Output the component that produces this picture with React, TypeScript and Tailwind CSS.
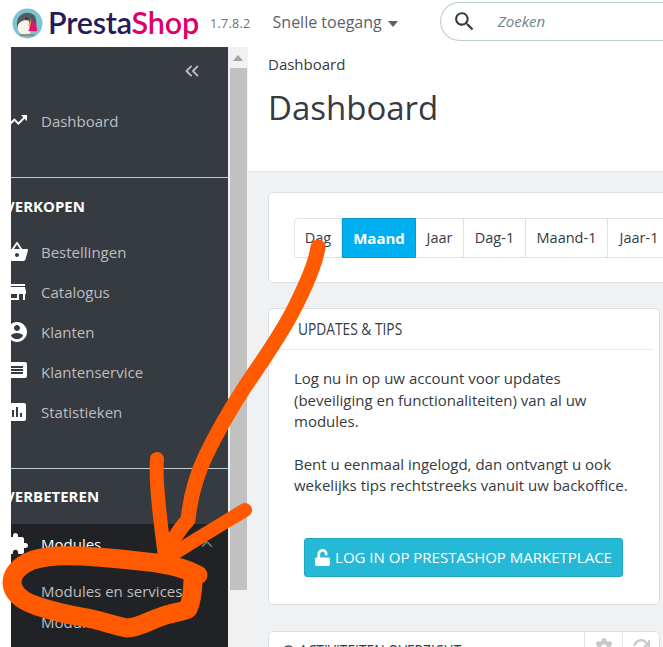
import { FaUnlock, FaCog } from "react-icons/fa";
import { FiRefreshCw } from "react-icons/fi";
import { ChevronsLeft, ChevronUp } from "lucide-react";

const paths = {
  trend: "M16 6l2.29 2.29-4.88 4.88-4-4L2 16.59 3.41 18l6-6 4 4 6.3-6.29L22 12V6z",
  basket: "M17.21 9l-4.38-6.56c-.19-.28-.51-.42-.83-.42-.32 0-.64.14-.83.43L6.79 9H2c-.55 0-1 .45-1 1 0 .09.01.18.04.27l2.54 9.27c.23.84 1 1.46 1.92 1.46h13c.92 0 1.69-.62 1.93-1.46l2.54-9.27L23 10c0-.55-.45-1-1-1h-4.79zM9 9l3-4.4L15 9H9zm3 8c-1.1 0-2-.9-2-2s.9-2 2-2 2 .9 2 2-.9 2-2 2z",
  store: "M20 4H4v2h16V4zm1 10v-2l-1-5H4l-1 5v2h1v6h10v-6h4v6h2v-6h1zm-9 4H6v-4h6v4z",
  account: "M12 2C6.48 2 2 6.48 2 12s4.48 10 10 10 10-4.48 10-10S17.52 2 12 2zm0 3c1.66 0 3 1.34 3 3s-1.34 3-3 3-3-1.34-3-3 1.34-3 3-3zm0 14.2c-2.5 0-4.71-1.28-6-3.22.03-1.99 4-3.08 6-3.08 1.99 0 5.97 1.09 6 3.08-1.29 1.94-3.5 3.22-6 3.22z",
  chat: "M20 2H4c-1.1 0-1.99.9-1.99 2L2 22l4-4h14c1.1 0 2-.9 2-2V4c0-1.1-.9-2-2-2zm-2 12H6v-2h12v2zm0-3H6V9h12v2zm0-3H6V6h12v2z",
  stats: "M19 3H5c-1.1 0-2 .9-2 2v14c0 1.1.9 2 2 2h14c1.1 0 2-.9 2-2V5c0-1.1-.9-2-2-2zM9 17H7v-7h2v7zm4 0h-2V7h2v10zm4 0h-2v-4h2v4z",
  ext: "M20.5 11H19V7c0-1.1-.9-2-2-2h-4V3.5C13 2.12 11.88 1 10.5 1S8 2.12 8 3.5V5H4c-1.1 0-1.99.9-1.99 2v3.8H3.5c1.49 0 2.7 1.21 2.7 2.7s-1.21 2.7-2.7 2.7H2V20c0 1.1.9 2 2 2h3.8v-1.5c0-1.49 1.21-2.7 2.7-2.7 1.49 0 2.7 1.21 2.7 2.7V22H17c1.1 0 2-.9 2-2v-4h1.5c1.38 0 2.5-1.12 2.5-2.5S21.88 11 20.5 11z",
};

function Icon({ d }: { d: string }) {
  return (
    <svg viewBox="0 0 24 24" className="w-6 h-6 shrink-0 fill-white">
      <path d={d} />
    </svg>
  );
}

function NavItem({ d, label, className = "h-10", text = "text-[#bebebe]" }: { d: string; label: string; className?: string; text?: string }) {
  return (
    <div className={`flex items-center -ml-[6px] ${className}`}>
      <Icon d={d} />
      <span className={`ml-3 text-[15px] ${text}`}>{label}</span>
    </div>
  );
}

function Logo() {
  return (
    <svg viewBox="0 0 32 32" className="w-[31px] h-[31px] shrink-0">
      <circle cx="16" cy="16" r="15.5" fill="#7cc4d2" />
      <path d="M5 17c0-8 5-12 11-12s9 4 9 9v8H9c-3 0-4-2-4-5z" fill="#565a60" />
      <path d="M6 18c2-5 7-6 11-5l3 10c-1 3-3 5-6 5-5 0-9-4-8-10z" fill="#f4f4f0" />
      <path d="M20 11l5 7 1 6h-9z" fill="#e6106f" />
      <path d="M20 11l-3 6 1 6z" fill="#f5b335" />
      <circle cx="15" cy="11" r="1.2" fill="#222" />
      <path d="M8 27h15v2H8z" fill="#9a8468" />
    </svg>
  );
}

const periods = [
  { t: "Dag", w: "w-[47px]" },
  { t: "Maand", w: "w-[74px]", active: true },
  { t: "Jaar", w: "w-12" },
  { t: "Dag-1", w: "w-[62px]" },
  { t: "Maand-1", w: "w-[82px]" },
  { t: "Jaar-1", w: "w-[62px]" },
];

export default function App() {
  return (
    <div className="relative w-[663px] h-[647px] overflow-hidden bg-white font-['Open_Sans',sans-serif] text-[#363a41]">
      {/* top bar */}
      <header className="flex items-center h-[47px] pl-3 whitespace-nowrap">
        <Logo />
        <span className="ml-[5px] w-[157px] shrink-0 font-['Lato',sans-serif] font-semibold text-[30.5px] leading-none tracking-[-0.2px] -mt-[2px]">
          <span className="text-[#251b5b]">Presta</span>
          <span className="text-[#df0067]">Shop</span>
        </span>
        <span className="ml-[5px] mt-[2px] text-[12.5px] tracking-[0.3px] text-[#6c6f75]">1.7.8.2</span>
        <span className="ml-[22px] -mt-[3px] text-[16px] text-[#5c6169]">Snelle toegang</span>
        <svg viewBox="0 0 10 6" className="ml-[6px] w-[10px] h-[6px] shrink-0 fill-[#5c6169]"><path d="M0 0h10L5 6z" /></svg>
        <div className="ml-[42px] flex items-center shrink-0 w-[260px] h-[39px] -mt-[4px] rounded-l-[20px] border border-r-0 border-[#bbcdd2]">
          <svg viewBox="0 0 24 24" className="ml-[11px] w-[25px] h-[25px] fill-[#363a41]">
            <path d="M15.5 14h-.79l-.28-.27C15.41 12.59 16 11.11 16 9.5 16 5.91 13.09 3 9.5 3S3 5.91 3 9.5 5.91 16 9.5 16c1.61 0 3.09-.59 4.23-1.57l.27.28v.79l5 4.99L20.49 19l-4.99-5zm-6 0C7.01 14 5 11.99 5 9.5S7.01 5 9.5 5 14 7.01 14 9.5 11.99 14 9.5 14z" />
          </svg>
          <span className="ml-[21px] italic text-[15px] text-[#6c868e]">Zoeken</span>
        </div>
      </header>

      <div className="flex h-[600px] pl-[11px]">
        {/* sidebar */}
        <aside className="w-[217px] shrink-0 overflow-hidden bg-[#363a41] flex flex-col">
          <div className="shrink-0 h-[131px] border-b border-[#bbcdd2] pr-[25px]">
            <div className="flex justify-end pt-[13px]">
              <ChevronsLeft size={22} strokeWidth={2} className="text-[#bebebe]" />
            </div>
            <NavItem d={paths.trend} label="Dashboard" className="h-6 mt-[27px]" />
          </div>
          <div className="shrink-0 h-[56px] flex items-center -ml-[6px] font-bold text-[15px] text-white">VERKOPEN</div>
          <div className="shrink-0 flex flex-col h-[235px] border-b border-[#bbcdd2]">
            <div className="-mt-[2px]">
              <NavItem d={paths.basket} label="Bestellingen" />
              <NavItem d={paths.store} label="Catalogus" />
              <NavItem d={paths.account} label="Klanten" />
              <NavItem d={paths.chat} label="Klantenservice" />
              <NavItem d={paths.stats} label="Statistieken" />
            </div>
          </div>
          <div className="shrink-0 h-[55px] flex items-center -ml-[6px] font-bold text-[15px] text-white">VERBETEREN</div>
          <div className="flex-1 bg-[#202226] flex flex-col">
            <div className="flex items-center justify-between pr-[12px]">
              <NavItem d={paths.ext} label="Modules" text="text-white" />
              <ChevronUp size={18} className="text-[#6c868e]" />
            </div>
            <div className="pl-[30px] h-[26px] mt-[14px] flex items-center text-[15px] text-[#bebebe]">Modules en services</div>
            <div className="pl-[30px] h-[26px] mt-[5px] flex items-center text-[15px] text-[#bebebe]">Module manager</div>
          </div>
        </aside>

        {/* scrollbar */}
        <div className="w-5 shrink-0 bg-[#f1f1f1] flex flex-col items-center pt-[8px]">
          <svg viewBox="0 0 10 6" className="w-[10px] h-[6px] fill-[#a3a3a3]"><path d="M5 0l5 6H0z" /></svg>
          <div className="mt-[7px] w-[17px] h-[522px] bg-[#c1c1c1]" />
        </div>

        {/* content */}
        <main className="flex-1 min-w-0 overflow-hidden bg-[#eff1f2] flex flex-col">
          <div className="shrink-0 h-[125px] bg-white border-b border-[#dfe3e5] pl-5 pt-[7px]">
            <div className="text-[15px] leading-5 text-[#363a41]">Dashboard</div>
            <h1 className="mt-[12px] text-[33px] leading-[44px] font-normal text-[#363a41]">Dashboard</h1>
          </div>

          <div className="pl-5 pt-5 flex flex-col">
            <section className="w-[420px] h-[91px] rounded-[5px] bg-white border border-[#dbe0e2] pl-[25px] pt-[25px]">
              <div className="inline-flex h-[40px] rounded-[4px] border border-[#dfe3e5] w-max">
                {periods.map((p) => (
                  <div
                    key={p.t}
                    className={
                      p.active
                        ? `${p.w} flex items-center justify-center -my-px bg-[#00aff0] border border-[#0a98cf] text-white font-bold text-[15px]`
                        : `${p.w} flex items-center justify-center border-r border-[#dfe3e5] text-[14.5px] text-[#363a41] last:border-r-0`
                    }
                  >
                    {p.t}
                  </div>
                ))}
              </div>
            </section>

            <section className="mt-[25px] w-[392px] h-[297px] rounded-[5px] bg-white border border-[#dbe0e2] px-[5px] flex flex-col">
              <div className="h-[40px] ml-[24px] -mr-[5px] flex items-center text-[16px] text-[#363a41]">
                <span className="inline-block origin-left scale-x-[0.86] whitespace-nowrap">UPDATES &amp; TIPS</span>
              </div>
              <div className="border-t border-[#e8eaeb]" />
              <p className="mt-[18px] ml-[20px] w-[340px] text-[15px] leading-[21.5px] text-[#363a41]">
                Log nu in op uw account voor updates (beveiliging en functionaliteiten) van al uw modules.
              </p>
              <p className="mt-[21px] ml-[20px] w-[340px] text-[15px] leading-[21.5px] text-[#363a41]">
                Bent u eenmaal ingelogd, dan ontvangt u ook wekelijks tips rechtstreeks vanuit uw backoffice.
              </p>
              <div className="flex justify-center mt-[41px] -translate-x-px">
                <button className="h-[39px] w-[319px] rounded-[3px] bg-[#25b9d7] border border-[#1fa8c4] text-white text-[15px] flex items-center justify-center gap-[4px]">
                  <FaUnlock size={17} />
                  LOG IN OP PRESTASHOP MARKETPLACE
                </button>
              </div>
            </section>

            <section className="mt-[26px] w-[392px] h-[60px] rounded-[5px] bg-white border border-[#dbe0e2] flex items-start">
              <div className="flex-1 flex items-center gap-[3px] pl-[12px] pt-[9px] text-[#363a41]">
                <svg viewBox="0 0 24 24" className="w-[15px] h-[15px] fill-[#363a41]">
                  <path d="M12 2a10 10 0 1 0 0 20 10 10 0 0 0 0-20zm0 18a8 8 0 1 1 0-16 8 8 0 0 1 0 16zm.5-13H11v6l5.2 3.1.8-1.2-4.5-2.7z" />
                </svg>
                <span className="inline-block origin-left scale-x-[0.86] whitespace-nowrap text-[16px] leading-5">ACTIVITEITEN OVERZICHT</span>
              </div>
              <div className="w-[38px] h-[30px] border-l border-[#dfe3e5] flex justify-center pt-[6px]">
                <FaCog size={18} className="text-[#c8c8c8]" />
              </div>
              <div className="w-[37px] h-[30px] border-l border-[#dfe3e5] flex justify-center pt-[6px]">
                <FiRefreshCw size={18} strokeWidth={3} className="text-[#c8c8c8]" />
              </div>
            </section>
          </div>
        </main>
      </div>

      {/* hand-drawn annotation */}
      <svg viewBox="0 0 663 647" className="absolute inset-0 w-[663px] h-[647px] pointer-events-none" fill="none" stroke="#ff5a00" strokeLinecap="round" strokeLinejoin="round">
        <path strokeWidth="15" d="M318 247C316 262 306 285 296 305C284 330 262 362 246 385C235 402 218 430 206 455C195 478 190 500 188 520C178 530 172 542 166 552" />
        <path strokeWidth="14" d="M157 459C155 480 160 520 165 556" />
        <path strokeWidth="14" d="M245 510C222 524 195 540 170 556" />
        <path strokeWidth="19" d="M198 575C185 568 170 565 157 563C130 560 105 557 80 556C60 555 45 556 33 560C20 565 12 573 12 583C13 595 25 602 37 606C55 612 70 615 82 617C100 620 112 625 127 628C140 628 155 617 170 614C178 612 184 611 188 609C192 600 193 590 193 578" />
      </svg>
    </div>
  );
}
